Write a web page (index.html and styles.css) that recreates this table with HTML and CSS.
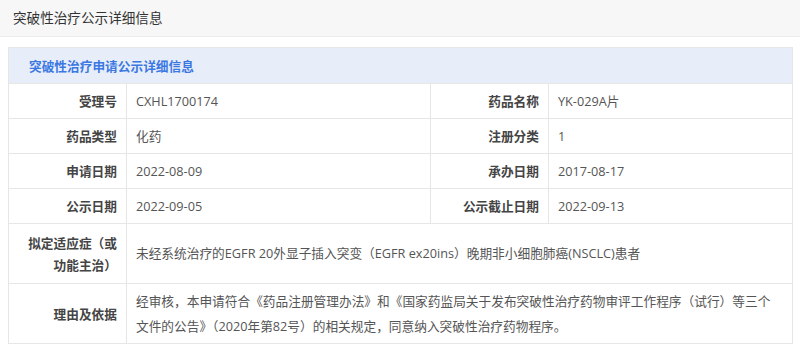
FILE: index.html
```html
<!DOCTYPE html>
<html lang="zh-CN">
<head>
<meta charset="utf-8">
<title>突破性治疗公示详细信息</title>
<link rel="stylesheet" href="styles.css">
</head>
<body>
<div class="page-head">突破性治疗公示详细信息</div>
<div class="wrap">
<table class="info">
<colgroup>
<col class="c-label"><col class="c-val1"><col class="c-label"><col class="c-val2">
</colgroup>
<tr class="title-row"><td colspan="4">突破性治疗申请公示详细信息</td></tr>
<tr class="row"><th>受理号</th><td>CXHL1700174</td><th>药品名称</th><td>YK-029A片</td></tr>
<tr class="row"><th>药品类型</th><td>化药</td><th>注册分类</th><td>1</td></tr>
<tr class="row"><th>申请日期</th><td>2022-08-09</td><th>承办日期</th><td>2017-08-17</td></tr>
<tr class="row"><th>公示日期</th><td>2022-09-05</td><th>公示截止日期</th><td>2022-09-13</td></tr>
<tr class="row tall"><th>拟定适应症（或功能主治）</th><td colspan="3">未经系统治疗的EGFR 20外显子插入突变（EGFR ex20ins）晚期非小细胞肺癌(NSCLC)患者</td></tr>
<tr class="row tall"><th>理由及依据</th><td colspan="3">经审核，本申请符合《药品注册管理办法》和《国家药监局关于发布突破性治疗药物审评工作程序（试行）等三个文件的公告》（2020年第82号）的相关规定，同意纳入突破性治疗药物程序。</td></tr>
</table>
</div>
</body>
</html>
```
FILE: styles.css
```css
html, body {
  margin: 0;
  padding: 0;
  background: #ffffff;
}
body {
  font-family: "Open Sans", "Noto Sans CJK SC", sans-serif;
  color: #333;
}
.page-head {
  height: 36px;
  line-height: 35px;
  background: #f7f7f7;
  border-bottom: 1px solid #ececec;
  padding-left: 13px;
  font-size: 13.6px;
  color: #333;
}
.wrap {
  padding: 10px 8px 0 8px;
}
.info {
  width: 784px;
  border-collapse: collapse;
  table-layout: fixed;
  border: 1px solid #e6e6e6;
  font-size: 12.7px;
}
.c-label { width: 118px; }
.c-val1 { width: 304px; }
.c-val2 { width: 244px; }
.title-row td {
  height: 35px;
  background: #e8eef9;
  color: #3b78e2;
  font-weight: 700;
  padding: 0 0 0 20px;
  border-bottom: 1px solid #e6e6e6;
}
.row th, .row td {
  height: 34px;
  border: 1px solid #e6e6e6;
  padding: 0 9px;
  vertical-align: middle;
}
.row th {
  text-align: right;
  font-weight: 700;
  color: #444;
  line-height: 22px;
}
.row td {
  text-align: left;
  font-weight: 400;
  color: #555;
  line-height: 25px;
}
.row.tall th, .row.tall td {
  height: 59px;
}
.row.tall td {
  padding-right: 16px;
}
```
